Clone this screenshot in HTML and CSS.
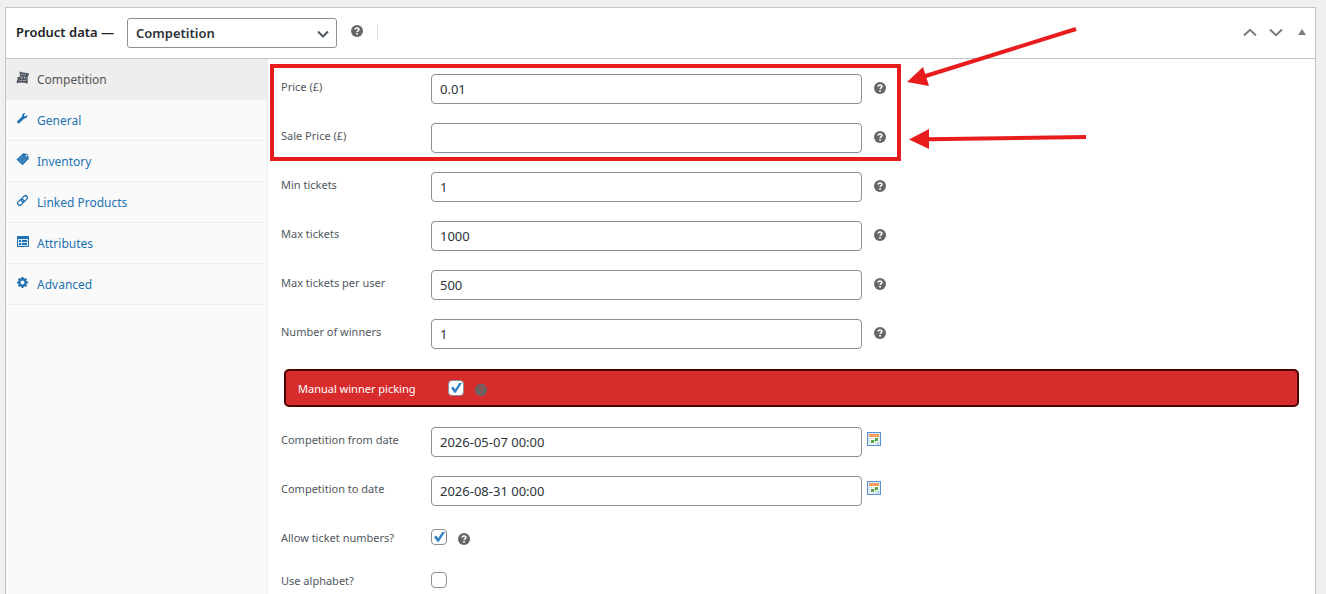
FILE: index.html
```html
<!DOCTYPE html>
<html lang="en">
<head>
<meta charset="utf-8">
<title>Product data</title>
<link rel="stylesheet" href="styles.css">
</head>
<body>
<svg class="defs" width="0" height="0" aria-hidden="true">
  <symbol id="help" viewBox="0 0 12 12">
    <circle cx="6" cy="6" r="6" fill="#666"/>
    <path class="help-mark" d="M4.1 4.6C4.1 2.4 7.9 2.4 7.9 4.5C7.9 5.8 6.1 5.8 6.1 7.1" fill="none" stroke-width="1.6"/>
    <rect class="help-dot" x="5.2" y="8" width="1.7" height="1.6"/>
  </symbol>
  <symbol id="calendar" viewBox="0 0 14 14">
    <rect x=".5" y=".5" width="13" height="13" fill="#dcebfa" stroke="#5a92d0"/>
    <rect x="2" y="2" width="10" height="10" fill="#fff"/>
    <rect x="2" y="2" width="10" height="3" fill="#f99550"/>
    <path d="M3 3.500H11" stroke="#fcc49c" stroke-dasharray="1 1"/>
    <path d="M2 6.500H12M2 8.500H12M2 10.500H9" stroke="#c3cfdc" stroke-dasharray="1 1"/>
    <path d="M8 6h3v3H8zM4 8h3v3H4z" fill="#57a549"/>
    <path d="M7 8h1v1H7zM8 9h1v2H8z" fill="#a8cf9f"/>
    <path d="M12 9V12H9z" fill="#a9c9e9"/>
  </symbol>
</svg>

<main class="postbox">
  <header class="postbox-header">
    <label class="title" for="type">Product data —</label>
    <span class="select-wrap">
      <select id="type"><option>Competition</option></select>
      <svg class="select-arrow" width="12" height="8" viewBox="0 0 12 8"><path d="M1 1.500L6 6.500L11 1.500" fill="none" stroke="#50575e" stroke-width="2"/></svg>
    </span>
    <svg class="help help-header" width="12" height="12"><use href="#help"/></svg>
    <span class="divider"></span>
    <div class="actions">
      <button type="button" aria-label="Move up"><svg width="14" height="9" viewBox="0 0 14 9"><path d="M1 7.500L7 1.800L13 7.500" fill="none" stroke="#787c82" stroke-width="2"/></svg></button>
      <button type="button" aria-label="Move down"><svg width="14" height="9" viewBox="0 0 14 9"><path d="M1 1.500L7 7.200L13 1.500" fill="none" stroke="#787c82" stroke-width="2"/></svg></button>
      <button type="button" aria-label="Toggle panel"><svg width="8" height="6" viewBox="0 0 8 6"><path d="M4 0L8 6H0z" fill="#787c82"/></svg></button>
    </div>
  </header>

  <div class="postbox-body">
    <nav class="tabs">
      <a class="tab active" href="#competition"><svg width="14" height="14" viewBox="0 0 14 14"><path d="M3.500.500L7 1.500L13 2.200L12.200 5L11.500 7L11.800 12.500L5 11.500L.5 12.200L1 9L2 8L1 6.500L4 5.500z" fill="#50575e"/><path d="M5 3.200L11 4M4 6.500L11 6.500M3 9.500L10 9.500M6 3L5 11M9 3L8 12" stroke="#c7c8ca" stroke-width=".7" stroke-dasharray="1 1"/></svg><span>Competition</span></a>
      <a class="tab" href="#general"><svg width="14" height="14" viewBox="0 0 14 14"><path d="M11.200 2.700L9.600 4.400L8.300 4L8 2.800L9.600 1.200C7.600.7 5.700 2.200 6.100 4.400L1.500 8.900C.4 10.300 2 12.200 3.500 11L8.200 6.400C10.400 6.800 12 4.700 11.200 2.700z" fill="#2271b1"/></svg><span>General</span></a>
      <a class="tab" href="#inventory"><svg width="14" height="14" viewBox="0 0 14 14"><path d="M7 .3L11.500 1L13 5.500L6.500 12.300L.5 6.500z" fill="#2271b1"/><path d="M2.800 6.500L7.500 2M4.300 8L9.500 3.200M5.800 9.500L11.500 4.500" stroke="#a9cce8" stroke-width=".9" stroke-dasharray="1 .6"/><circle cx="10.500" cy="2.600" r=".9" fill="#fafafa"/></svg><span>Inventory</span></a>
      <a class="tab" href="#linked"><svg width="14" height="14" viewBox="0 0 14 14"><g fill="none" stroke="#2271b1" stroke-width="1.300" transform="rotate(-45 6.500 6.500)"><rect x="5.500" y="4.500" width="7" height="4" rx="2"/><rect x=".5" y="4.500" width="7" height="4" rx="2"/></g></svg><span>Linked Products</span></a>
      <a class="tab" href="#attributes"><svg width="14" height="14" viewBox="0 0 14 14"><rect x="1" y="1" width="12" height="11" rx=".5" fill="#2271b1"/><path d="M2 4h10v7H2z" fill="#d6e7f5"/><path d="M3 5h2v2H3zM3 8h2v2H3zM6 5h5v2H6zM6 8h5v2H6z" fill="#2271b1"/></svg><span>Attributes</span></a>
      <a class="tab" href="#advanced"><svg width="14" height="14" viewBox="0 0 14 14"><circle cx="6.500" cy="6.500" r="3.200" fill="none" stroke="#2271b1" stroke-width="2.400"/><path d="M6.500 1v2M6.500 10v2M1 6.500h2M10 6.500h2M2.600 2.600l1.400 1.400M9 9l1.400 1.400M10.400 2.600L9 4M4 9l-1.400 1.400" stroke="#2271b1" stroke-width="2"/></svg><span>Advanced</span></a>
    </nav>

    <form class="panel">
      <div class="row"><label for="price">Price (£)</label><div class="field"><input id="price" type="text" value="0.01"><svg class="help" width="12" height="12"><use href="#help"/></svg></div></div>
      <div class="row"><label for="sale">Sale Price (£)</label><div class="field"><input id="sale" type="text"><svg class="help" width="12" height="12"><use href="#help"/></svg></div></div>
      <div class="row"><label for="min">Min tickets</label><div class="field"><input id="min" type="text" value="1"><svg class="help" width="12" height="12"><use href="#help"/></svg></div></div>
      <div class="row"><label for="max">Max tickets</label><div class="field"><input id="max" type="text" value="1000"><svg class="help" width="12" height="12"><use href="#help"/></svg></div></div>
      <div class="row"><label for="peruser">Max tickets per user</label><div class="field"><input id="peruser" type="text" value="500"><svg class="help" width="12" height="12"><use href="#help"/></svg></div></div>
      <div class="row"><label for="winners">Number of winners</label><div class="field"><input id="winners" type="text" value="1"><svg class="help" width="12" height="12"><use href="#help"/></svg></div></div>
      <div class="manual"><label for="manual">Manual winner picking</label><input id="manual" type="checkbox" checked><svg class="help" width="12" height="12"><use href="#help"/></svg></div>
      <div class="row"><label for="from">Competition from date</label><div class="field"><input id="from" type="text" value="2026-05-07 00:00"><svg class="calendar" width="14" height="14"><use href="#calendar"/></svg></div></div>
      <div class="row"><label for="to">Competition to date</label><div class="field"><input id="to" type="text" value="2026-08-31 00:00"><svg class="calendar" width="14" height="14"><use href="#calendar"/></svg></div></div>
      <div class="row check"><label for="allow">Allow ticket numbers?</label><div class="field"><input id="allow" type="checkbox" checked><svg class="help" width="12" height="12"><use href="#help"/></svg></div></div>
      <div class="row check"><label for="alpha">Use alphabet?</label><div class="field"><input id="alpha" type="checkbox"></div></div>
    </form>
  </div>
</main>

<svg class="annotations" width="1100" height="170" viewBox="0 0 1100 170" aria-hidden="true">
  <rect x="272" y="66" width="627" height="93" fill="none" stroke="#e81c1c" stroke-width="4"/>
  <path d="M1076 29L924 76.500" stroke="#e81c1c" stroke-width="4"/>
  <path d="M907 82L923 67L929 86z" fill="#e81c1c"/>
  <path d="M1086 137L928 139.300" stroke="#e81c1c" stroke-width="4"/>
  <path d="M909 139.500L929 129V149z" fill="#e81c1c"/>
</svg>
</body>
</html>
```
FILE: styles.css
```css
* { box-sizing: border-box; }

body {
  margin: 0;
  padding: 7px 10px 0 5px;
  background: #f0f0f1;
  color: #3c434a;
  font: 12px/16px "Noto Sans", "Open Sans", sans-serif;
}

.defs { display: none; }

svg { display: block; flex: none; }

.postbox {
  display: flex;
  flex-direction: column;
  min-height: calc(100vh - 7px);
  border: 1px solid #c3c4c7;
  border-bottom: 0;
  background: #fff;
}

.postbox-header {
  display: flex;
  align-items: center;
  min-height: 51px;
  padding: 0 9px 1px 10px;
  border-bottom: 1px solid #c3c4c7;
}

.title {
  width: 111px;
  padding-bottom: 2px;
  color: #1d2327;
  font-size: 13px;
  font-weight: 600;
  white-space: nowrap;
}

.select-wrap { position: relative; }

select {
  display: block;
  width: 210px;
  height: 30px;
  padding: 0 24px 0 8px;
  border: 1px solid #8c8f94;
  border-radius: 3px;
  appearance: none;
  background: #fff;
  color: #2c3338;
  font: 600 13px/28px "Noto Sans", "Open Sans", sans-serif;
}

.select-arrow {
  position: absolute;
  top: 12px;
  right: 8px;
  pointer-events: none;
}

.help { --mark: #fff; }
.help-mark { stroke: var(--mark); }
.help-dot { fill: var(--mark); }

.help-header { margin: 0 14px 3px; }

.divider {
  width: 1px;
  height: 16px;
  margin-bottom: 2px;
  background: #dcdcde;
}

.actions {
  display: flex;
  align-items: center;
  gap: 12px;
  margin-left: auto;
}

button {
  padding: 0;
  border: 0;
  background: none;
}

.actions button:last-child { margin: 0 0 2px 3px; }

.postbox-body {
  display: flex;
  flex: 1;
}

.tabs {
  flex: none;
  width: 262px;
  border-right: 1px solid #eee;
  background: #fafafa;
}

.tab {
  display: flex;
  align-items: center;
  gap: 7px;
  height: 41px;
  padding: 1px 10px 0;
  border-bottom: 1px solid #eee;
  color: #2271b1;
  text-decoration: none;
}

.tab svg { margin-bottom: 3px; }

.tab.active {
  background: #eee;
  color: #555;
}

.panel {
  flex: 1;
  min-width: 0;
  padding-top: 6px;
}

.row {
  display: flex;
  padding: 9px 22px 10px 13px;
}

.row label {
  flex: none;
  width: 150px;
  padding-top: 5px;
  color: #50575e;
  font-size: 11px;
}

.field {
  display: flex;
  flex: 1;
}

input[type="text"] {
  width: 50%;
  height: 30px;
  padding: 0 8px;
  border: 1px solid #8c8f94;
  border-radius: 4px;
  background: #fff;
  color: #2c3338;
  font: 13px/28px "Noto Sans", "Open Sans", sans-serif;
}

.field .help { margin: 8px 0 0 12px; }
.field .calendar { margin: 5px 0 0 5px; }

input[type="checkbox"] {
  flex: none;
  width: 16px;
  height: 16px;
  margin: 0;
  border: 1px solid #8c8f94;
  border-radius: 4px;
  appearance: none;
  background: #fff;
}

input[type="checkbox"]:checked {
  background: #fff url("data:image/svg+xml,%3Csvg xmlns='http://www.w3.org/2000/svg' viewBox='0 0 14 14'%3E%3Cpath d='M2 7L4.200 5.600L6.200 8.200L10.200 2H13L6.800 11.800H5.300z' fill='%233582c4'/%3E%3C/svg%3E") center / 14px 14px no-repeat;
}

.row.check { padding: 13px 22px 14px 13px; }
.row.check:last-child { padding: 12px 22px 6px 13px; }
.row.check label { padding-top: 1px; }
.row.check .help { margin: 4px 0 0 11px; }

.manual {
  display: flex;
  align-items: center;
  height: 38px;
  margin: 10px 16px 11px;
  padding: 0 12px;
  border: 2px solid #4b0000;
  border-radius: 5px;
  background: #d82c2c;
}

.manual label {
  width: 150px;
  padding-top: 1px;
  color: #fff;
  font-size: 11px;
}

.manual .help {
  --mark: #a04545;
  margin: 3px 0 0 11px;
}

.annotations {
  position: absolute;
  top: 0;
  left: 0;
  pointer-events: none;
}
```
